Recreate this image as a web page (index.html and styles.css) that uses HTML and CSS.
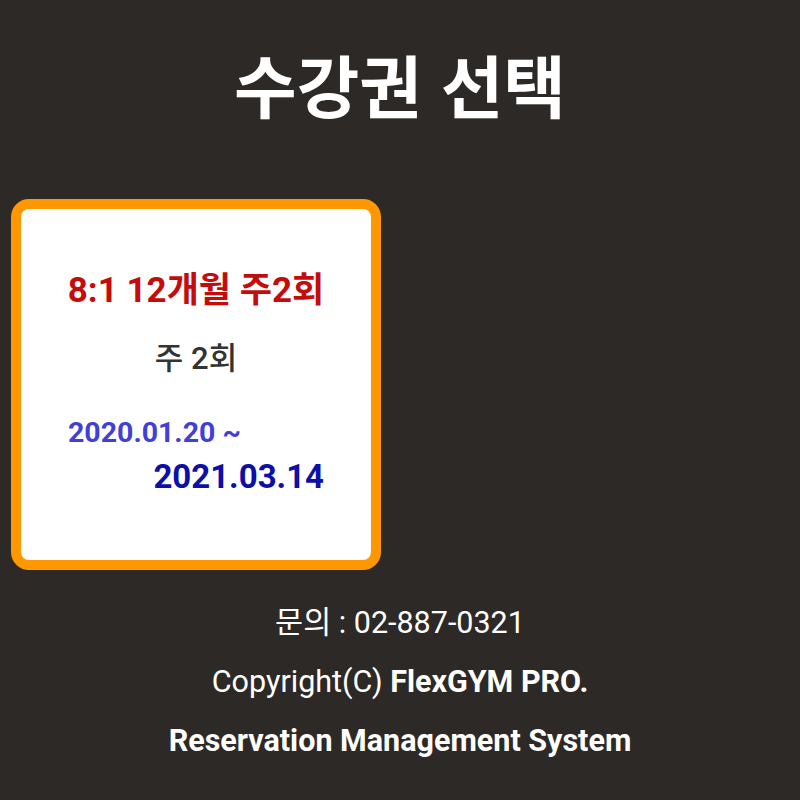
FILE: index.html
```html
<!DOCTYPE html>
<html lang="ko">
<head>
<meta charset="utf-8">
<link rel="stylesheet" href="styles.css">
</head>
<body>
<div class="page">
  <h1 class="title">수강권 선택</h1>
  <div class="cards">
    <div class="card">
      <div class="card-name">8:1 12개월 주2회</div>
      <div class="card-freq">주 2회</div>
      <div class="card-dates">
        <div class="date-start">2020.01.20 ~</div>
        <div class="date-end">2021.03.14</div>
      </div>
    </div>
  </div>
  <footer class="footer">
    <div class="f-line">문의 : 02-887-0321</div>
    <div class="f-line">Copyright(C) <b>FlexGYM PRO.</b></div>
    <div class="f-line bold">Reservation Management System</div>
  </footer>
</div>
</body>
</html>
```

FILE: styles.css
```css
html, body {
  margin: 0;
  padding: 0;
  background: #2d2927;
}
body {
  font-family: Roboto, "Noto Sans CJK KR", sans-serif;
  color: #fff;
  width: 800px;
  height: 800px;
  overflow: hidden;
}
.page {
  display: flex;
  flex-direction: column;
}
.title {
  margin: 0;
  padding-top: 44px;
  height: 149px;
  box-sizing: border-box;
  text-align: center;
  font-family: "Noto Sans CJK KR", sans-serif;
  font-weight: 700;
  font-size: 68px;
  line-height: 80px;
  color: #fff;
}
.cards {
  padding-left: 11px;
  padding-top: 50px;
}
.card {
  width: 350px;
  height: 351px;
  border: 10px solid #ff9800;
  border-radius: 18px;
  background: #fff;
  display: flex;
  flex-direction: column;
  align-items: center;
  box-sizing: content-box;
}
.card-name {
  margin-top: 62px;
  color: #c40c0c;
  font-weight: 700;
  font-size: 35px;
  line-height: 40px;
}
.card-freq {
  margin-top: 30px;
  color: #333;
  font-weight: 500;
  font-size: 31px;
  line-height: 36px;
}
.card-dates {
  margin-top: 39px;
  width: 256px;
  display: flex;
  flex-direction: column;
}
.date-start {
  align-self: flex-start;
  color: #4040d8;
  font-weight: 700;
  font-size: 28.5px;
  line-height: 34px;
}
.date-end {
  align-self: flex-end;
  margin-top: 8px;
  color: #0e0ea8;
  font-weight: 700;
  font-size: 33px;
  line-height: 38px;
}
.footer {
  margin-top: 35px;
  display: flex;
  flex-direction: column;
  align-items: center;
  gap: 23px;
}
.f-line {
  font-size: 30.5px;
  line-height: 36px;
  color: #fff;
}
.f-line b, .f-line.bold {
  font-weight: 700;
}
```
